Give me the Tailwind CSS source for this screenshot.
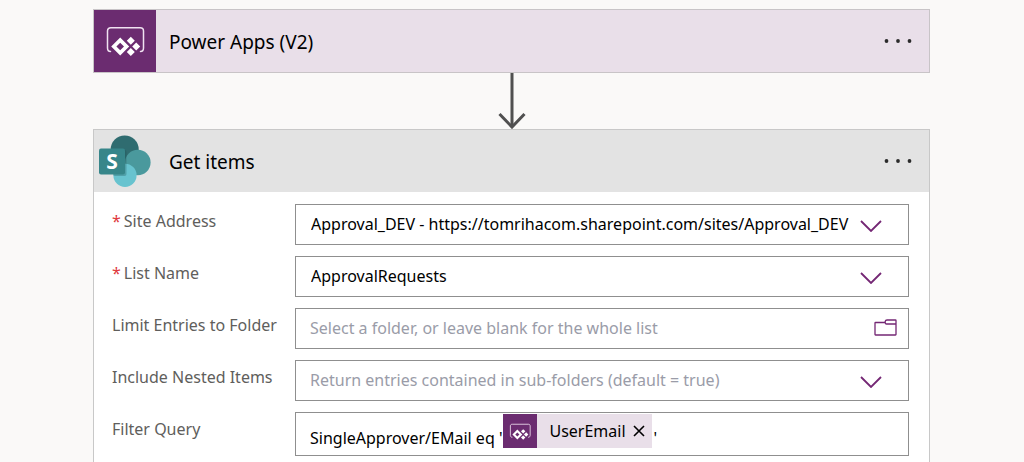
<!DOCTYPE html>
<html lang="en">
  <head>
    <meta charset="UTF-8" />
    <meta name="viewport" content="width=device-width, initial-scale=1.0" />
    <title>Flow designer</title>
    <script src="https://cdn.jsdelivr.net/npm/@tailwindcss/browser@4"></script>
  </head>
  <body
    class="bg-[#faf9f8] min-h-screen flex flex-col font-['Noto_Sans',sans-serif] text-black"
  >
    <!-- Shared icons -->
    <svg class="hidden" aria-hidden="true">
      <symbol id="powerapps" viewBox="0 0 40 30">
        <path
          d="M5.500 25.500C3.500 25.500 2.500 24 2.500 22V5C2.500 3 3.800 1.800 5.800 1.800H35.200C37.200 1.800 38.500 3 38.500 5V22C38.500 24 37.500 25.500 35.500 25.500"
          fill="none"
          stroke="#f0e2f1"
          stroke-width="1.500"
          stroke-linecap="round"
        />
        <path
          fill="#fff"
          fill-rule="evenodd"
          d="M15.200 11.500L24.200 20.500L15.200 29.500L6.200 20.500ZM15.200 16.700L11.400 20.500L15.200 24.300L19 20.500Z"
        />
        <path
          fill="#fff"
          d="M25.800 10.700L29.800 14.700L25.800 18.700L21.800 14.700ZM31.200 16.500L35.200 20.500L31.200 24.500L27.200 20.500ZM25.800 22.100L29.800 26.100L25.800 30L21.800 26.100Z"
        />
      </symbol>
      <symbol id="chevron" viewBox="0 0 22 12">
        <path
          d="M1 1L11 11L21 1"
          fill="none"
          stroke="#742774"
          stroke-width="1.800"
        />
      </symbol>
      <symbol id="dots" viewBox="0 0 28 4">
        <circle cx="2.500" cy="2" r="1.900" />
        <circle cx="14" cy="2" r="1.900" />
        <circle cx="25.500" cy="2" r="1.900" />
      </symbol>
    </svg>

    <main class="flex-1 flex flex-col pl-[93px] pr-[94px] pt-[9px]">
      <!-- Trigger -->
      <section
        class="flex items-center h-16 border border-[#c8c4c7] bg-[#e9dfe9]"
      >
        <div
          class="flex items-center justify-center w-[62px] self-stretch bg-[#6b2c70]"
        >
          <svg class="w-10 h-[30px]"><use href="#powerapps" /></svg>
        </div>
        <h2 class="flex-1 pl-[13px] pt-0.5 text-[19px]">Power Apps (V2)</h2>
        <button aria-label="Trigger menu" class="px-[17px] py-3 text-[#2b2b2b]">
          <svg class="w-7 h-1 fill-current"><use href="#dots" /></svg>
        </button>
      </section>

      <!-- Connector -->
      <svg
        class="self-center w-7 h-14 fill-none stroke-[#505050]"
        viewBox="0 0 28 56"
        aria-hidden="true"
      >
        <path d="M14 0V54" stroke-width="3" />
        <path d="M1.500 41L14 54L26.500 41" stroke-width="3" />
      </svg>

      <!-- Action -->
      <section class="flex-1 flex flex-col border border-b-0 border-[#c8c8c8] bg-white">
        <header class="flex items-center h-[62px] bg-[#e3e3e3]">
          <div class="flex items-center w-[62px] pl-[5px]">
            <svg class="w-[52px] h-[52px]" viewBox="0 0 52 52">
              <circle cx="25.700" cy="14.500" r="14" fill="#2f6c70" />
              <circle cx="38.800" cy="27.500" r="12.800" fill="#4a999d" />
              <circle cx="26" cy="40.300" r="11.600" fill="#68c3cf" />
              <rect
                x="14"
                y="15"
                width="13.500"
                height="26"
                rx="2"
                fill="#1d4f53"
                opacity=".3"
              />
              <rect x="0" y="13.500" width="26" height="26" rx="2" fill="#37868a" />
              <text
                x="13"
                y="34"
                text-anchor="middle"
                font-size="21"
                font-weight="700"
                fill="#fff"
              >
                S
              </text>
            </svg>
          </div>
          <h2 class="flex-1 pl-[13px] pt-0.5 text-[19px]">Get items</h2>
          <button aria-label="Action menu" class="px-[17px] py-3 text-[#2b2b2b]">
            <svg class="w-7 h-1 fill-current"><use href="#dots" /></svg>
          </button>
        </header>

        <form
          class="grid grid-cols-[183px_1fr] gap-y-[11px] pl-[18px] pr-5 pt-3 pb-1.5 text-base"
        >
          <label for="site" class="flex gap-[3px] pt-[5px] text-[#605e5c]"
            ><span class="text-[#e0393e]">*</span> Site Address</label
          >
          <div class="relative">
            <select
              id="site"
              class="appearance-none w-full h-[41px] px-[15px] pb-0.5 border border-[#8f8f8f] bg-white"
            >
              <option>
                Approval_DEV - https://tomrihacom.sharepoint.com/sites/Approval_DEV
              </option>
            </select>
            <svg class="absolute right-[27px] top-4 w-[22px] h-3 pointer-events-none">
              <use href="#chevron" />
            </svg>
          </div>

          <label for="list" class="flex gap-[3px] pt-[5px] text-[#605e5c]"
            ><span class="text-[#e0393e]">*</span> List Name</label
          >
          <div class="relative">
            <select
              id="list"
              class="appearance-none w-full h-[41px] px-[15px] pb-0.5 border border-[#8f8f8f] bg-white"
            >
              <option>ApprovalRequests</option>
            </select>
            <svg class="absolute right-[27px] top-4 w-[22px] h-3 pointer-events-none">
              <use href="#chevron" />
            </svg>
          </div>

          <label for="folder" class="pt-[5px] text-[#605e5c]"
            >Limit Entries to Folder</label
          >
          <div class="relative">
            <input
              id="folder"
              type="text"
              placeholder="Select a folder, or leave blank for the whole list"
              class="w-full h-[41px] px-3.5 pb-0.5 border border-[#8f8f8f] bg-white placeholder:text-[#9a9ca8]"
            />
            <button
              type="button"
              aria-label="Browse folders"
              class="absolute right-3 top-[11px]"
            >
              <svg
                class="block w-[23px] h-[17px] fill-none stroke-[#742774]"
                viewBox="0 0 23 17"
                stroke-width="1.300"
              >
                <path
                  d="M11 3.500H1.500Q1 3.500 1 4V15.500Q1 16 1.500 16H21.500Q22 16 22 15.500V1.500Q22 1 21.500 1H13Q11.500 1 11.200 2.500Q11 5 12.500 5H22"
                />
              </svg>
            </button>
          </div>

          <label for="nested" class="pt-[5px] text-[#605e5c]"
            >Include Nested Items</label
          >
          <div class="relative">
            <select
              id="nested"
              class="appearance-none w-full h-[41px] px-3.5 pb-0.5 border border-[#8f8f8f] bg-white text-[#9a9ca8]"
            >
              <option>
                Return entries contained in sub-folders (default = true)
              </option>
            </select>
            <svg class="absolute right-[27px] top-4 w-[22px] h-3 pointer-events-none">
              <use href="#chevron" />
            </svg>
          </div>

          <span id="filter-label" class="pt-[5px] text-[#605e5c]"
            >Filter Query</span
          >
          <div
            role="textbox"
            aria-labelledby="filter-label"
            contenteditable="true"
            class="flex h-11 px-3.5 pt-px border border-[#8f8f8f] bg-white"
          >
            <span class="pt-3">SingleApprover/EMail eq '</span>
            <span
              contenteditable="false"
              class="flex items-center h-[34px] ml-px mr-0.5 bg-[#e9dfe9]"
            >
              <span
                class="flex items-center justify-center w-[34px] self-stretch bg-[#6b2c70]"
              >
                <svg class="w-[22px] h-[17px]"><use href="#powerapps" /></svg>
              </span>
              <span class="pl-3">UserEmail</span>
              <button type="button" aria-label="Remove" class="px-[7px]">
                <svg
                  class="w-3 h-3 stroke-black"
                  viewBox="0 0 12 12"
                  stroke-width="1.600"
                >
                  <path d="M1 1L11 11M11 1L1 11" />
                </svg>
              </button>
            </span>
            <span class="pt-3">'</span>
          </div>
        </form>
      </section>
    </main>
  </body>
</html>
